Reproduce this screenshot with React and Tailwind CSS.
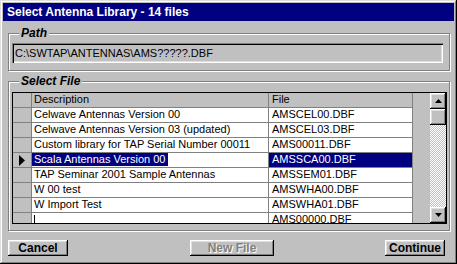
export default function App() {
  const rows = [
    ["Celwave Antennas Version 00", "AMSCEL00.DBF"],
    ["Celwave Antennas Version 03 (updated)", "AMSCEL03.DBF"],
    ["Custom library for TAP Serial Number 00011", "AMS00011.DBF"],
    ["Scala Antennas Version 00", "AMSSCA00.DBF", true],
    ["TAP Seminar 2001 Sample Antennas", "AMSSEM01.DBF"],
    ["W 00 test", "AMSWHA00.DBF"],
    ["W Import Test", "AMSWHA01.DBF"],
  ];
  const raised =
    "shadow-[inset_-1px_-1px_0_#000,inset_1px_1px_0_#fff,inset_-2px_-2px_0_#808080,inset_2px_2px_0_#dfdfdf]";
  return (
    <div
      className="w-[457px] h-[264px] bg-[#c0c0c0] flex flex-col px-[3px] pt-[3px] shadow-[inset_-1px_-1px_0_#000,inset_1px_1px_0_#dfdfdf,inset_-2px_-2px_0_#808080,inset_2px_2px_0_#fff]"
      style={{ fontFamily: '"Liberation Sans", Arial, sans-serif' }}
    >
      <div className="h-[18px] bg-[#000080] text-white font-bold text-[12px] leading-none pl-[4px] flex items-center">
        Select Antenna Library - 14 files
      </div>
      <div className="flex flex-col pl-[5px] pr-[4px]">
        {/* Path group */}
        <div className="relative mt-[12px] h-[38px] border border-[#808080] shadow-[1px_1px_0_#fff,inset_1px_1px_0_#fff] pl-[3px] pr-[6px] pt-[9px]">
          <div className="absolute -top-[8px] left-[10px] bg-[#c0c0c0] px-[2px] text-[12px] leading-[14px] font-bold italic text-black">
            Path
          </div>
          <div className="h-[20px] flex items-center pl-[3px] text-[11px] text-black shadow-[inset_1px_1px_0_#808080,inset_2px_2px_0_#000,inset_-1px_-1px_0_#fff,inset_-2px_-2px_0_#dfdfdf]">
            C:\SWTAP\ANTENNAS\AMS?????.DBF
          </div>
        </div>
        {/* Select File group */}
        <div className="relative mt-[10px] h-[150px] border border-[#808080] shadow-[1px_1px_0_#fff,inset_1px_1px_0_#fff] pl-[3px] pt-[10px]">
          <div className="absolute -top-[8px] left-[10px] bg-[#c0c0c0] px-[2px] text-[12px] leading-[14px] font-bold italic text-black">
            Select File
          </div>
          <div className="w-[435px] h-[132px] border border-black flex overflow-hidden bg-[#c0c0c0] text-[11px] text-black">
            <div className="w-[417px] flex flex-col overflow-hidden">
              <div className="flex h-[15px] shrink-0">
                <div className="w-[19px] border-r border-b border-[#808080]" />
                <div className="w-[237px] border-r border-b border-[#808080] pl-[2px] leading-[12px]">Description</div>
                <div className="w-[144px] border-r border-b border-[#808080] pl-[3px] leading-[12px]">File</div>
              </div>
              {rows.map(([d, f, sel]) => (
                <div key={f} className="flex h-[15px] shrink-0">
                  <div className="w-[19px] border-r border-b border-[#808080] flex items-center pl-[6px]">
                    {sel && (
                      <svg width="6" height="11" viewBox="0 0 6 11">
                        <polygon points="0,0 6,5.5 0,11" fill="#000" />
                      </svg>
                    )}
                  </div>
                  <div className="w-[237px] border-r border-b border-[#808080] bg-white leading-[12px] whitespace-nowrap overflow-hidden">
                    {sel ? (
                      <span className="inline-block h-[13px] bg-[#000080] text-white pl-[2px] pr-[3px]">{d}</span>
                    ) : (
                      <span className="pl-[2px]">{d}</span>
                    )}
                  </div>
                  <div
                    className={
                      "w-[144px] border-r border-b border-[#808080] pl-[3px] leading-[12px] " +
                      (sel ? "bg-[#000080] text-white" : "bg-white")
                    }
                  >
                    {f}
                  </div>
                </div>
              ))}
              <div className="flex h-[15px] shrink-0">
                <div className="w-[19px] border-r border-[#808080]" />
                <div className="w-[237px] border-r border-[#808080] bg-white pl-[2px] pt-[2px]">
                  <div className="w-px h-[9px] bg-black" />
                </div>
                <div className="w-[144px] border-r border-[#808080] bg-white pl-[3px] leading-[12px]">AMS00000.DBF</div>
              </div>
            </div>
            {/* scrollbar */}
            <div className="w-[16px] flex flex-col">
              <div className={"h-[16px] flex items-center justify-center bg-[#c0c0c0] " + raised}>
                <svg width="7" height="4" viewBox="0 0 7 4">
                  <polygon points="3.5,0 7,4 0,4" fill="#000" />
                </svg>
              </div>
              <div className={"h-[16px] bg-[#c0c0c0] " + raised} />
              <div className="flex-1 bg-[repeating-conic-gradient(#fff_0%_25%,#c0c0c0_0%_50%)] bg-[length:2px_2px]" />
              <div className={"h-[16px] flex items-center justify-center bg-[#c0c0c0] " + raised}>
                <svg width="7" height="4" viewBox="0 0 7 4">
                  <polygon points="0,0 7,0 3.5,4" fill="#000" />
                </svg>
              </div>
            </div>
          </div>
        </div>
        {/* Buttons */}
        <div className="mt-[9px] flex h-[16px] text-[12px] font-bold">
          <div className={"w-[60px] h-[16px] flex items-center justify-center text-black " + raised}>Cancel</div>
          <div className={"ml-[122px] w-[84px] h-[16px] flex items-center justify-center text-[#808080] [text-shadow:1px_1px_0_#fff] " + raised}>
            New File
          </div>
          <div className={"ml-auto mr-[5px] w-[60px] h-[16px] flex items-center justify-center text-black " + raised}>Continue</div>
        </div>
      </div>
    </div>
  );
}
